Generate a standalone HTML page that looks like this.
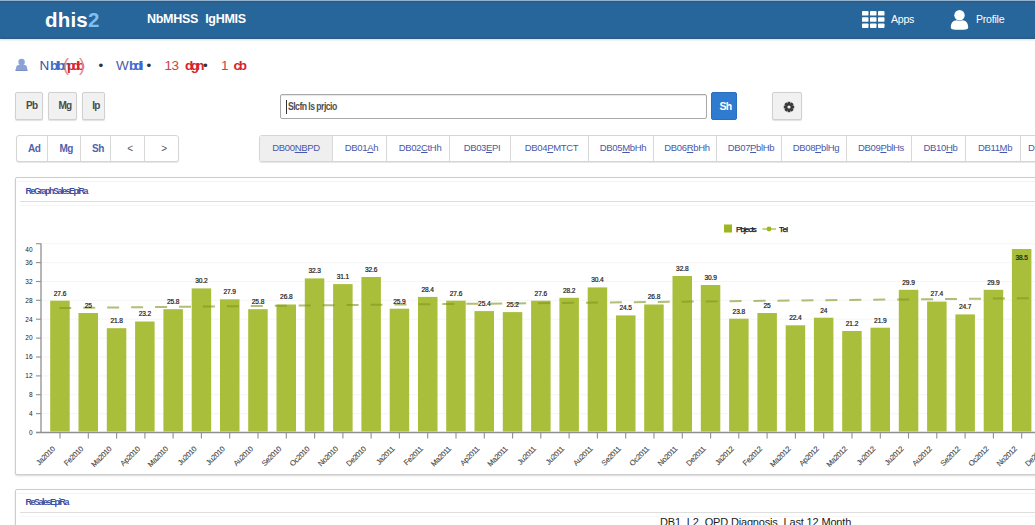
<!DOCTYPE html>
<html><head><meta charset="utf-8">
<style>
*{box-sizing:border-box}
html,body{margin:0;padding:0}
body{width:1035px;height:525px;overflow:hidden;background:#fff;font-family:"Liberation Sans",sans-serif;position:relative}
.abs{position:absolute}
.ul{top:57.5px;font-size:13.5px;white-space:nowrap}
#hdr{left:0;top:0;width:1035px;height:38.5px;background:#26669b;border-top:1px solid #8fb3d3;border-bottom:2px solid #305d85;box-shadow:inset 0 2px 0 #2e5e88, 0 1px 2px rgba(40,100,160,.22)}
#logo{left:45px;top:7.5px;font-size:20.5px;font-weight:bold;color:#fff;letter-spacing:0.2px}
#logo span{color:#7fbfee}
#apptitle{left:147px;top:12px;font-size:12.5px;font-weight:bold;color:#fff;letter-spacing:-0.3px;word-spacing:4px;white-space:nowrap}
.hw{color:#fff;font-size:10.6px;letter-spacing:-0.25px}
.btn{position:absolute;border:1px solid #d0d0d0;border-radius:2px;background:#f1f1f1;font-size:10px;font-weight:bold;color:#4a4a4a;text-align:center;box-shadow:0 1px 1px rgba(0,0,0,.12)}
.grp{position:absolute;border:1px solid #d5d5d5;border-radius:3px;background:#fff;box-shadow:0 1px 1px rgba(0,0,0,.10);display:flex;height:27px;top:135px}
.grp div{flex-shrink:0;border-left:1px solid #d8d8d8;font-size:10px;color:#3a4fa0;display:flex;align-items:center;justify-content:center;height:100%}
.g1 div{font-weight:bold;padding-left:5px;letter-spacing:-0.5px;color:#5262ab}
.tabs div{font-size:9.5px;color:#4858a8;letter-spacing:-0.35px;padding-bottom:2px;padding-left:4px}
.tabs div:first-child{padding-left:0}
.tabs u{text-decoration-thickness:1px;text-underline-offset:1px}
.grp div:first-child{border-left:none}
.panel{position:absolute;left:15px;width:1040px;border:1px solid #cdcdcd;border-radius:2px;background:#fff;box-shadow:0 1px 2px rgba(0,0,0,.16), inset 0 3px 0 #fff, inset 0 4px 0 #f3f3f3}
.ptitle{position:absolute;left:9.5px;font-size:8.8px;font-weight:bold;color:#3a4d9f;letter-spacing:-1.38px;white-space:nowrap}
.psep{position:absolute;left:4px;right:0;height:1px;background:#dedede;box-shadow:0 4px 0 #f6f6f6}
</style></head><body>
<div id="hdr" class="abs"></div>
<div id="logo" class="abs">dhis<span>2</span></div>
<div id="apptitle" class="abs">NbMHSS IgHMIS</div>
<!-- apps icon -->
<div class="abs" style="left:862px;top:11px;width:23px;height:17px">
 <svg width="23" height="17" viewBox="0 0 23 17"><g fill="#fff">
 <rect x="0" y="0" width="6.5" height="4.6" rx="0.9"/><rect x="8" y="0" width="6.5" height="4.6" rx="0.9"/><rect x="16" y="0" width="6.5" height="4.6" rx="0.9"/>
 <rect x="0" y="6.2" width="6.5" height="4.6" rx="0.9"/><rect x="8" y="6.2" width="6.5" height="4.6" rx="0.9"/><rect x="16" y="6.2" width="6.5" height="4.6" rx="0.9"/>
 <rect x="0" y="12.4" width="6.5" height="4.6" rx="0.9"/><rect x="8" y="12.4" width="6.5" height="4.6" rx="0.9"/><rect x="16" y="12.4" width="6.5" height="4.6" rx="0.9"/>
 </g></svg></div>
<div class="abs hw" style="left:891px;top:13px">Apps</div>
<div class="abs" style="left:950px;top:10px;width:19px;height:20px">
 <svg width="19" height="20" viewBox="0 0 19 20"><g fill="#fff"><circle cx="9.5" cy="5.3" r="5.2"/><path d="M0.8 17.5 C0.8 12.5 3.5 10.5 6.5 10.3 C8 11.2 11 11.2 12.5 10.3 C15.5 10.5 18.2 12.5 18.2 17.5 C18.2 19.2 16.5 19.8 9.5 19.8 C2.5 19.8 0.8 19.2 0.8 17.5 Z"/></g></svg></div>
<div class="abs hw" style="left:976px;top:13px">Profile</div>

<!-- user line -->
<div class="abs" style="left:15px;top:57px;width:13px;height:13px">
 <svg width="13" height="13" viewBox="0 0 13 13"><g fill="#8aa1da"><circle cx="6.6" cy="4" r="3.2"/><path d="M0.4 12.6 L1.3 8.8 C1.8 7.3 3.5 6.6 6.6 6.6 C9.7 6.6 11.4 7.3 11.9 8.8 L12.6 12.6Z"/></g><rect x="0.5" y="12" width="12" height="0.8" fill="#6b7fb8"/></svg></div>
<div class="abs ul" style="left:39.5px;color:#3d4f9f;letter-spacing:-0.8px">N</div>
<div class="abs ul" style="left:50px;color:#3f6ccc;font-weight:bold;letter-spacing:-2.6px">blbn</div>
<div class="abs ul" style="left:63px;top:55px;font-size:18px;color:#e58a8a;font-weight:normal;letter-spacing:-2px">(</div>
<div class="abs ul" style="left:67px;color:#d8232a;font-weight:bold;letter-spacing:-3.5px">pdb</div>
<div class="abs ul" style="left:79px;top:55px;font-size:18px;color:#e58a8a;letter-spacing:-2px">)</div>
<div class="abs ul" style="left:98.5px;color:#333">&#8226;</div>
<div class="abs ul" style="left:116px;color:#4a5aa8">W</div>
<div class="abs ul" style="left:129px;color:#3a6bd6;font-weight:bold;letter-spacing:-3.2px">bdli</div>
<div class="abs ul" style="left:146.5px;color:#333">&#8226;</div>
<div class="abs ul" style="left:164.5px;color:#c8424c;letter-spacing:-0.4px">13</div>
<div class="abs ul" style="left:185px;color:#d8232a;font-weight:bold;letter-spacing:-2.6px">dgn</div>
<div class="abs ul" style="left:203px;color:#333">&#8226;</div>
<div class="abs ul" style="left:221px;color:#c8424c">1</div>
<div class="abs ul" style="left:233.5px;color:#d8232a;font-weight:bold;letter-spacing:-2.2px">cb</div>
<!-- buttons row -->
<div class="btn" style="left:15px;top:92px;width:27.5px;height:28px;line-height:26px;padding-left:6px;letter-spacing:-0.6px">Pb</div>
<div class="btn" style="left:48px;top:92px;width:29px;height:28px;line-height:26px;padding-left:5px;letter-spacing:-0.6px">Mg</div>
<div class="btn" style="left:82px;top:92px;width:23px;height:28px;line-height:26px;padding-left:5px;letter-spacing:-0.6px">Ip</div>
<div class="abs" style="left:280px;top:94px;width:427px;height:25px;border:1px solid #a9a9a9;border-radius:2px;background:#fff;box-shadow:inset 0 1px 1px rgba(0,0,0,.1)"></div>
<div class="abs" style="left:285.5px;top:99.5px;width:1.6px;height:14.5px;background:#333"></div>
<div class="abs" style="left:288px;top:100px;font-size:11px;font-weight:bold;color:#505050;letter-spacing:-0.7px;white-space:nowrap;transform:scaleX(0.79);transform-origin:0 0">Slcfn ls prjcio</div>
<div class="abs" style="left:711px;top:92px;width:26px;height:28px;background:#2f7bd0;border-radius:2px;border:1px solid #2a6fbd;color:#fff;font-weight:bold;font-size:10.5px;line-height:26px;text-align:center;padding-left:3px;letter-spacing:-0.6px">Sh</div>
<div class="btn" style="left:772px;top:92px;width:30px;height:28px;">
 <svg width="12" height="12" viewBox="0 0 12 12" style="position:absolute;left:9.5px;top:8px"><g fill="#3a3a3a"><circle cx="6" cy="6" r="3.8"/>
 <g id="t"><rect x="4.6" y="0.8" width="2.8" height="10.4"/></g>
 <rect x="4.6" y="0.8" width="2.8" height="10.4" transform="rotate(45 6 6)"/><rect x="4.6" y="0.8" width="2.8" height="10.4" transform="rotate(90 6 6)"/><rect x="4.6" y="0.8" width="2.8" height="10.4" transform="rotate(135 6 6)"/></g>
 <circle cx="6" cy="6" r="1.6" fill="#f1f1f1"/></svg></div>

<!-- button group -->
<div class="grp g1" style="left:16px;width:163px">
 <div style="width:29.5px">Ad</div><div style="width:33.5px">Mg</div><div style="width:30px">Sh</div><div style="width:34px;font-weight:normal;color:#555">&lt;</div><div style="width:34px;font-weight:normal;color:#555">&gt;</div>
</div>
<!-- tabs -->
<div class="grp tabs" style="left:259px;width:800px">
 <div style="width:72px;background:#efefef">DB00<u>NB</u>PD</div>
 <div style="width:54px">DB01<u>A</u>h</div>
 <div style="width:63px">DB02<u>C</u>tHh</div>
 <div style="width:61px">DB03<u>E</u>PI</div>
 <div style="width:78px">DB04<u>P</u>MTCT</div>
 <div style="width:65px">DB05<u>M</u>bHh</div>
 <div style="width:63px">DB06<u>R</u>bHh</div>
 <div style="width:65px">DB07<u>P</u>blHb</div>
 <div style="width:65px">DB08<u>P</u>blHg</div>
 <div style="width:65px">DB09<u>P</u>blHs</div>
 <div style="width:54px">DB10<u>H</u>b</div>
 <div style="width:55px">DB11<u>M</u>b</div>
 <div style="width:50px;justify-content:flex-start;padding-left:7px">DB12</div>
</div>

<!-- panel 1 -->
<div class="panel" style="top:177px;height:298px">
 <div class="ptitle" style="top:8px">ReGraphSalesEpiRa</div>
 <div class="psep" style="top:23px"></div>
</div>
<svg class="abs" style="left:0;top:0" width="1035" height="525" font-family="Liberation Sans, sans-serif">
<rect x="724" y="224.5" width="8" height="8" fill="#9db51e"/>
<text x="736" y="232" font-size="8" fill="#111" stroke="#111" stroke-width="0.25" letter-spacing="-0.9">Pbjects</text>
<line x1="762.5" y1="229" x2="776" y2="229" stroke="#a9be3b" stroke-width="1.3"/>
<circle cx="769" cy="229" r="2.4" fill="#9db51e"/>
<text x="779" y="232" font-size="8" fill="#111" stroke="#111" stroke-width="0.25" letter-spacing="-0.6">Tel</text>
<line x1="41" y1="413.6" x2="1035" y2="413.6" stroke="#f5f5f5" stroke-width="1"/>
<line x1="41" y1="394.7" x2="1035" y2="394.7" stroke="#f5f5f5" stroke-width="1"/>
<line x1="41" y1="375.9" x2="1035" y2="375.9" stroke="#f5f5f5" stroke-width="1"/>
<line x1="41" y1="357.0" x2="1035" y2="357.0" stroke="#f5f5f5" stroke-width="1"/>
<line x1="41" y1="338.1" x2="1035" y2="338.1" stroke="#f5f5f5" stroke-width="1"/>
<line x1="41" y1="319.2" x2="1035" y2="319.2" stroke="#f5f5f5" stroke-width="1"/>
<line x1="41" y1="300.3" x2="1035" y2="300.3" stroke="#f5f5f5" stroke-width="1"/>
<line x1="41" y1="281.5" x2="1035" y2="281.5" stroke="#f5f5f5" stroke-width="1"/>
<line x1="41" y1="262.6" x2="1035" y2="262.6" stroke="#f5f5f5" stroke-width="1"/>
<line x1="41" y1="243.7" x2="1035" y2="243.7" stroke="#f5f5f5" stroke-width="1"/>
<rect x="50.2" y="300.7" width="19.5" height="130.8" fill="#a9be3b"/>
<rect x="78.5" y="313.0" width="19.5" height="118.5" fill="#a9be3b"/>
<rect x="106.8" y="328.2" width="19.5" height="103.3" fill="#a9be3b"/>
<rect x="135.1" y="321.5" width="19.5" height="110.0" fill="#a9be3b"/>
<rect x="163.4" y="309.2" width="19.5" height="122.3" fill="#a9be3b"/>
<rect x="191.7" y="288.4" width="19.5" height="143.1" fill="#a9be3b"/>
<rect x="220.0" y="299.3" width="19.5" height="132.2" fill="#a9be3b"/>
<rect x="248.2" y="309.2" width="19.5" height="122.3" fill="#a9be3b"/>
<rect x="276.5" y="304.5" width="19.5" height="127.0" fill="#a9be3b"/>
<rect x="304.8" y="278.4" width="19.5" height="153.1" fill="#a9be3b"/>
<rect x="333.1" y="284.1" width="19.5" height="147.4" fill="#a9be3b"/>
<rect x="361.4" y="277.0" width="19.5" height="154.5" fill="#a9be3b"/>
<rect x="389.7" y="308.7" width="19.5" height="122.8" fill="#a9be3b"/>
<rect x="418.0" y="296.9" width="19.5" height="134.6" fill="#a9be3b"/>
<rect x="446.2" y="300.7" width="19.5" height="130.8" fill="#a9be3b"/>
<rect x="474.5" y="311.1" width="19.5" height="120.4" fill="#a9be3b"/>
<rect x="502.8" y="312.1" width="19.5" height="119.4" fill="#a9be3b"/>
<rect x="531.1" y="300.7" width="19.5" height="130.8" fill="#a9be3b"/>
<rect x="559.4" y="297.8" width="19.5" height="133.7" fill="#a9be3b"/>
<rect x="587.7" y="287.4" width="19.5" height="144.1" fill="#a9be3b"/>
<rect x="616.0" y="315.4" width="19.5" height="116.1" fill="#a9be3b"/>
<rect x="644.2" y="304.5" width="19.5" height="127.0" fill="#a9be3b"/>
<rect x="672.5" y="276.0" width="19.5" height="155.5" fill="#a9be3b"/>
<rect x="700.8" y="285.0" width="19.5" height="146.5" fill="#a9be3b"/>
<rect x="729.1" y="318.7" width="19.5" height="112.8" fill="#a9be3b"/>
<rect x="757.4" y="313.0" width="19.5" height="118.5" fill="#a9be3b"/>
<rect x="785.7" y="325.3" width="19.5" height="106.2" fill="#a9be3b"/>
<rect x="813.9" y="317.7" width="19.5" height="113.8" fill="#a9be3b"/>
<rect x="842.2" y="331.0" width="19.5" height="100.5" fill="#a9be3b"/>
<rect x="870.5" y="327.7" width="19.5" height="103.8" fill="#a9be3b"/>
<rect x="898.8" y="289.8" width="19.5" height="141.7" fill="#a9be3b"/>
<rect x="927.1" y="301.6" width="19.5" height="129.9" fill="#a9be3b"/>
<rect x="955.4" y="314.4" width="19.5" height="117.1" fill="#a9be3b"/>
<rect x="983.7" y="289.8" width="19.5" height="141.7" fill="#a9be3b"/>
<rect x="1011.9" y="249.0" width="19.5" height="182.5" fill="#a9be3b"/>
<rect x="1040.2" y="289.3" width="19.5" height="142.2" fill="#a9be3b"/>
<line x1="59.3" y1="308" x2="1035" y2="298.1" stroke="#82961e" stroke-opacity="0.62" stroke-width="2" stroke-dasharray="12 11.94"/>
<text x="60.0" y="295.5" text-anchor="middle" font-size="6.6" letter-spacing="-0.1" fill="#1a1a1a" stroke="#1a1a1a" stroke-width="0.2">27.6</text>
<text x="88.3" y="307.8" text-anchor="middle" font-size="6.6" letter-spacing="-0.1" fill="#1a1a1a" stroke="#1a1a1a" stroke-width="0.2">25</text>
<text x="116.6" y="323.0" text-anchor="middle" font-size="6.6" letter-spacing="-0.1" fill="#1a1a1a" stroke="#1a1a1a" stroke-width="0.2">21.8</text>
<text x="144.9" y="316.3" text-anchor="middle" font-size="6.6" letter-spacing="-0.1" fill="#1a1a1a" stroke="#1a1a1a" stroke-width="0.2">23.2</text>
<text x="173.1" y="304.0" text-anchor="middle" font-size="6.6" letter-spacing="-0.1" fill="#1a1a1a" stroke="#1a1a1a" stroke-width="0.2">25.8</text>
<text x="201.4" y="283.2" text-anchor="middle" font-size="6.6" letter-spacing="-0.1" fill="#1a1a1a" stroke="#1a1a1a" stroke-width="0.2">30.2</text>
<text x="229.7" y="294.1" text-anchor="middle" font-size="6.6" letter-spacing="-0.1" fill="#1a1a1a" stroke="#1a1a1a" stroke-width="0.2">27.9</text>
<text x="258.0" y="304.0" text-anchor="middle" font-size="6.6" letter-spacing="-0.1" fill="#1a1a1a" stroke="#1a1a1a" stroke-width="0.2">25.8</text>
<text x="286.3" y="299.3" text-anchor="middle" font-size="6.6" letter-spacing="-0.1" fill="#1a1a1a" stroke="#1a1a1a" stroke-width="0.2">26.8</text>
<text x="314.6" y="273.2" text-anchor="middle" font-size="6.6" letter-spacing="-0.1" fill="#1a1a1a" stroke="#1a1a1a" stroke-width="0.2">32.3</text>
<text x="342.9" y="278.9" text-anchor="middle" font-size="6.6" letter-spacing="-0.1" fill="#1a1a1a" stroke="#1a1a1a" stroke-width="0.2">31.1</text>
<text x="371.1" y="271.8" text-anchor="middle" font-size="6.6" letter-spacing="-0.1" fill="#1a1a1a" stroke="#1a1a1a" stroke-width="0.2">32.6</text>
<text x="399.4" y="303.5" text-anchor="middle" font-size="6.6" letter-spacing="-0.1" fill="#1a1a1a" stroke="#1a1a1a" stroke-width="0.2">25.9</text>
<text x="427.7" y="291.7" text-anchor="middle" font-size="6.6" letter-spacing="-0.1" fill="#1a1a1a" stroke="#1a1a1a" stroke-width="0.2">28.4</text>
<text x="456.0" y="295.5" text-anchor="middle" font-size="6.6" letter-spacing="-0.1" fill="#1a1a1a" stroke="#1a1a1a" stroke-width="0.2">27.6</text>
<text x="484.3" y="305.9" text-anchor="middle" font-size="6.6" letter-spacing="-0.1" fill="#1a1a1a" stroke="#1a1a1a" stroke-width="0.2">25.4</text>
<text x="512.6" y="306.9" text-anchor="middle" font-size="6.6" letter-spacing="-0.1" fill="#1a1a1a" stroke="#1a1a1a" stroke-width="0.2">25.2</text>
<text x="540.8" y="295.5" text-anchor="middle" font-size="6.6" letter-spacing="-0.1" fill="#1a1a1a" stroke="#1a1a1a" stroke-width="0.2">27.6</text>
<text x="569.1" y="292.6" text-anchor="middle" font-size="6.6" letter-spacing="-0.1" fill="#1a1a1a" stroke="#1a1a1a" stroke-width="0.2">28.2</text>
<text x="597.4" y="282.2" text-anchor="middle" font-size="6.6" letter-spacing="-0.1" fill="#1a1a1a" stroke="#1a1a1a" stroke-width="0.2">30.4</text>
<text x="625.7" y="310.2" text-anchor="middle" font-size="6.6" letter-spacing="-0.1" fill="#1a1a1a" stroke="#1a1a1a" stroke-width="0.2">24.5</text>
<text x="654.0" y="299.3" text-anchor="middle" font-size="6.6" letter-spacing="-0.1" fill="#1a1a1a" stroke="#1a1a1a" stroke-width="0.2">26.8</text>
<text x="682.3" y="270.8" text-anchor="middle" font-size="6.6" letter-spacing="-0.1" fill="#1a1a1a" stroke="#1a1a1a" stroke-width="0.2">32.8</text>
<text x="710.6" y="279.8" text-anchor="middle" font-size="6.6" letter-spacing="-0.1" fill="#1a1a1a" stroke="#1a1a1a" stroke-width="0.2">30.9</text>
<text x="738.8" y="313.5" text-anchor="middle" font-size="6.6" letter-spacing="-0.1" fill="#1a1a1a" stroke="#1a1a1a" stroke-width="0.2">23.8</text>
<text x="767.1" y="307.8" text-anchor="middle" font-size="6.6" letter-spacing="-0.1" fill="#1a1a1a" stroke="#1a1a1a" stroke-width="0.2">25</text>
<text x="795.4" y="320.1" text-anchor="middle" font-size="6.6" letter-spacing="-0.1" fill="#1a1a1a" stroke="#1a1a1a" stroke-width="0.2">22.4</text>
<text x="823.7" y="312.5" text-anchor="middle" font-size="6.6" letter-spacing="-0.1" fill="#1a1a1a" stroke="#1a1a1a" stroke-width="0.2">24</text>
<text x="852.0" y="325.8" text-anchor="middle" font-size="6.6" letter-spacing="-0.1" fill="#1a1a1a" stroke="#1a1a1a" stroke-width="0.2">21.2</text>
<text x="880.3" y="322.5" text-anchor="middle" font-size="6.6" letter-spacing="-0.1" fill="#1a1a1a" stroke="#1a1a1a" stroke-width="0.2">21.9</text>
<text x="908.5" y="284.6" text-anchor="middle" font-size="6.6" letter-spacing="-0.1" fill="#1a1a1a" stroke="#1a1a1a" stroke-width="0.2">29.9</text>
<text x="936.8" y="296.4" text-anchor="middle" font-size="6.6" letter-spacing="-0.1" fill="#1a1a1a" stroke="#1a1a1a" stroke-width="0.2">27.4</text>
<text x="965.1" y="309.2" text-anchor="middle" font-size="6.6" letter-spacing="-0.1" fill="#1a1a1a" stroke="#1a1a1a" stroke-width="0.2">24.7</text>
<text x="993.4" y="284.6" text-anchor="middle" font-size="6.6" letter-spacing="-0.1" fill="#1a1a1a" stroke="#1a1a1a" stroke-width="0.2">29.9</text>
<text x="1021.7" y="260.0" text-anchor="middle" font-size="6.6" letter-spacing="-0.1" fill="#1a1a1a" stroke="#1a1a1a" stroke-width="0.2">38.5</text>
<text x="1050.0" y="284.1" text-anchor="middle" font-size="6.6" letter-spacing="-0.1" fill="#1a1a1a" stroke="#1a1a1a" stroke-width="0.2">30</text>
<line x1="41" y1="243.5" x2="41" y2="432.5" stroke="#8f8f8f" stroke-width="1.3"/>
<line x1="36" y1="432.5" x2="1035" y2="432.5" stroke="#8f8f8f" stroke-width="1.3"/>
<line x1="36" y1="432.5" x2="41" y2="432.5" stroke="#8f8f8f" stroke-width="1.1"/>
<text x="32.5" y="434.8" text-anchor="end" font-size="6.5" fill="#222">0</text>
<line x1="36" y1="413.6" x2="41" y2="413.6" stroke="#8f8f8f" stroke-width="1.1"/>
<text x="32.5" y="415.9" text-anchor="end" font-size="6.5" fill="#222">4</text>
<line x1="36" y1="394.7" x2="41" y2="394.7" stroke="#8f8f8f" stroke-width="1.1"/>
<text x="32.5" y="397.0" text-anchor="end" font-size="6.5" fill="#222">8</text>
<line x1="36" y1="375.9" x2="41" y2="375.9" stroke="#8f8f8f" stroke-width="1.1"/>
<text x="32.5" y="378.2" text-anchor="end" font-size="6.5" fill="#222">12</text>
<line x1="36" y1="357.0" x2="41" y2="357.0" stroke="#8f8f8f" stroke-width="1.1"/>
<text x="32.5" y="359.3" text-anchor="end" font-size="6.5" fill="#222">16</text>
<line x1="36" y1="338.1" x2="41" y2="338.1" stroke="#8f8f8f" stroke-width="1.1"/>
<text x="32.5" y="340.4" text-anchor="end" font-size="6.5" fill="#222">20</text>
<line x1="36" y1="319.2" x2="41" y2="319.2" stroke="#8f8f8f" stroke-width="1.1"/>
<text x="32.5" y="321.5" text-anchor="end" font-size="6.5" fill="#222">24</text>
<line x1="36" y1="300.3" x2="41" y2="300.3" stroke="#8f8f8f" stroke-width="1.1"/>
<text x="32.5" y="302.6" text-anchor="end" font-size="6.5" fill="#222">28</text>
<line x1="36" y1="281.5" x2="41" y2="281.5" stroke="#8f8f8f" stroke-width="1.1"/>
<text x="32.5" y="283.8" text-anchor="end" font-size="6.5" fill="#222">32</text>
<line x1="36" y1="262.6" x2="41" y2="262.6" stroke="#8f8f8f" stroke-width="1.1"/>
<text x="32.5" y="264.9" text-anchor="end" font-size="6.5" fill="#222">36</text>
<line x1="36" y1="243.7" x2="41" y2="243.7" stroke="#8f8f8f" stroke-width="1.1"/>
<text x="32.5" y="252.3" text-anchor="end" font-size="6.5" fill="#222">40</text>
<line x1="60.0" y1="432.5" x2="60.0" y2="438.5" stroke="#8f8f8f" stroke-width="1.1"/>
<text transform="translate(55.5,449.5) rotate(-45)" text-anchor="end" font-size="7.6" letter-spacing="-0.35" fill="#444" stroke="#444" stroke-width="0.1">Ja2010</text>
<line x1="88.3" y1="432.5" x2="88.3" y2="438.5" stroke="#8f8f8f" stroke-width="1.1"/>
<text transform="translate(83.8,449.5) rotate(-45)" text-anchor="end" font-size="7.6" letter-spacing="-0.35" fill="#444" stroke="#444" stroke-width="0.1">Fe2010</text>
<line x1="116.6" y1="432.5" x2="116.6" y2="438.5" stroke="#8f8f8f" stroke-width="1.1"/>
<text transform="translate(112.1,449.5) rotate(-45)" text-anchor="end" font-size="7.6" letter-spacing="-0.35" fill="#444" stroke="#444" stroke-width="0.1">Ma2010</text>
<line x1="144.9" y1="432.5" x2="144.9" y2="438.5" stroke="#8f8f8f" stroke-width="1.1"/>
<text transform="translate(140.4,449.5) rotate(-45)" text-anchor="end" font-size="7.6" letter-spacing="-0.35" fill="#444" stroke="#444" stroke-width="0.1">Ap2010</text>
<line x1="173.1" y1="432.5" x2="173.1" y2="438.5" stroke="#8f8f8f" stroke-width="1.1"/>
<text transform="translate(168.6,449.5) rotate(-45)" text-anchor="end" font-size="7.6" letter-spacing="-0.35" fill="#444" stroke="#444" stroke-width="0.1">Ma2010</text>
<line x1="201.4" y1="432.5" x2="201.4" y2="438.5" stroke="#8f8f8f" stroke-width="1.1"/>
<text transform="translate(196.9,449.5) rotate(-45)" text-anchor="end" font-size="7.6" letter-spacing="-0.35" fill="#444" stroke="#444" stroke-width="0.1">Ju2010</text>
<line x1="229.7" y1="432.5" x2="229.7" y2="438.5" stroke="#8f8f8f" stroke-width="1.1"/>
<text transform="translate(225.2,449.5) rotate(-45)" text-anchor="end" font-size="7.6" letter-spacing="-0.35" fill="#444" stroke="#444" stroke-width="0.1">Ju2010</text>
<line x1="258.0" y1="432.5" x2="258.0" y2="438.5" stroke="#8f8f8f" stroke-width="1.1"/>
<text transform="translate(253.5,449.5) rotate(-45)" text-anchor="end" font-size="7.6" letter-spacing="-0.35" fill="#444" stroke="#444" stroke-width="0.1">Au2010</text>
<line x1="286.3" y1="432.5" x2="286.3" y2="438.5" stroke="#8f8f8f" stroke-width="1.1"/>
<text transform="translate(281.8,449.5) rotate(-45)" text-anchor="end" font-size="7.6" letter-spacing="-0.35" fill="#444" stroke="#444" stroke-width="0.1">Se2010</text>
<line x1="314.6" y1="432.5" x2="314.6" y2="438.5" stroke="#8f8f8f" stroke-width="1.1"/>
<text transform="translate(310.1,449.5) rotate(-45)" text-anchor="end" font-size="7.6" letter-spacing="-0.35" fill="#444" stroke="#444" stroke-width="0.1">Oc2010</text>
<line x1="342.9" y1="432.5" x2="342.9" y2="438.5" stroke="#8f8f8f" stroke-width="1.1"/>
<text transform="translate(338.4,449.5) rotate(-45)" text-anchor="end" font-size="7.6" letter-spacing="-0.35" fill="#444" stroke="#444" stroke-width="0.1">No2010</text>
<line x1="371.1" y1="432.5" x2="371.1" y2="438.5" stroke="#8f8f8f" stroke-width="1.1"/>
<text transform="translate(366.6,449.5) rotate(-45)" text-anchor="end" font-size="7.6" letter-spacing="-0.35" fill="#444" stroke="#444" stroke-width="0.1">De2010</text>
<line x1="399.4" y1="432.5" x2="399.4" y2="438.5" stroke="#8f8f8f" stroke-width="1.1"/>
<text transform="translate(394.9,449.5) rotate(-45)" text-anchor="end" font-size="7.6" letter-spacing="-0.35" fill="#444" stroke="#444" stroke-width="0.1">Ja2011</text>
<line x1="427.7" y1="432.5" x2="427.7" y2="438.5" stroke="#8f8f8f" stroke-width="1.1"/>
<text transform="translate(423.2,449.5) rotate(-45)" text-anchor="end" font-size="7.6" letter-spacing="-0.35" fill="#444" stroke="#444" stroke-width="0.1">Fe2011</text>
<line x1="456.0" y1="432.5" x2="456.0" y2="438.5" stroke="#8f8f8f" stroke-width="1.1"/>
<text transform="translate(451.5,449.5) rotate(-45)" text-anchor="end" font-size="7.6" letter-spacing="-0.35" fill="#444" stroke="#444" stroke-width="0.1">Ma2011</text>
<line x1="484.3" y1="432.5" x2="484.3" y2="438.5" stroke="#8f8f8f" stroke-width="1.1"/>
<text transform="translate(479.8,449.5) rotate(-45)" text-anchor="end" font-size="7.6" letter-spacing="-0.35" fill="#444" stroke="#444" stroke-width="0.1">Ap2011</text>
<line x1="512.6" y1="432.5" x2="512.6" y2="438.5" stroke="#8f8f8f" stroke-width="1.1"/>
<text transform="translate(508.1,449.5) rotate(-45)" text-anchor="end" font-size="7.6" letter-spacing="-0.35" fill="#444" stroke="#444" stroke-width="0.1">Ma2011</text>
<line x1="540.8" y1="432.5" x2="540.8" y2="438.5" stroke="#8f8f8f" stroke-width="1.1"/>
<text transform="translate(536.3,449.5) rotate(-45)" text-anchor="end" font-size="7.6" letter-spacing="-0.35" fill="#444" stroke="#444" stroke-width="0.1">Ju2011</text>
<line x1="569.1" y1="432.5" x2="569.1" y2="438.5" stroke="#8f8f8f" stroke-width="1.1"/>
<text transform="translate(564.6,449.5) rotate(-45)" text-anchor="end" font-size="7.6" letter-spacing="-0.35" fill="#444" stroke="#444" stroke-width="0.1">Ju2011</text>
<line x1="597.4" y1="432.5" x2="597.4" y2="438.5" stroke="#8f8f8f" stroke-width="1.1"/>
<text transform="translate(592.9,449.5) rotate(-45)" text-anchor="end" font-size="7.6" letter-spacing="-0.35" fill="#444" stroke="#444" stroke-width="0.1">Au2011</text>
<line x1="625.7" y1="432.5" x2="625.7" y2="438.5" stroke="#8f8f8f" stroke-width="1.1"/>
<text transform="translate(621.2,449.5) rotate(-45)" text-anchor="end" font-size="7.6" letter-spacing="-0.35" fill="#444" stroke="#444" stroke-width="0.1">Se2011</text>
<line x1="654.0" y1="432.5" x2="654.0" y2="438.5" stroke="#8f8f8f" stroke-width="1.1"/>
<text transform="translate(649.5,449.5) rotate(-45)" text-anchor="end" font-size="7.6" letter-spacing="-0.35" fill="#444" stroke="#444" stroke-width="0.1">Oc2011</text>
<line x1="682.3" y1="432.5" x2="682.3" y2="438.5" stroke="#8f8f8f" stroke-width="1.1"/>
<text transform="translate(677.8,449.5) rotate(-45)" text-anchor="end" font-size="7.6" letter-spacing="-0.35" fill="#444" stroke="#444" stroke-width="0.1">No2011</text>
<line x1="710.6" y1="432.5" x2="710.6" y2="438.5" stroke="#8f8f8f" stroke-width="1.1"/>
<text transform="translate(706.1,449.5) rotate(-45)" text-anchor="end" font-size="7.6" letter-spacing="-0.35" fill="#444" stroke="#444" stroke-width="0.1">De2011</text>
<line x1="738.8" y1="432.5" x2="738.8" y2="438.5" stroke="#8f8f8f" stroke-width="1.1"/>
<text transform="translate(734.3,449.5) rotate(-45)" text-anchor="end" font-size="7.6" letter-spacing="-0.35" fill="#444" stroke="#444" stroke-width="0.1">Ja2012</text>
<line x1="767.1" y1="432.5" x2="767.1" y2="438.5" stroke="#8f8f8f" stroke-width="1.1"/>
<text transform="translate(762.6,449.5) rotate(-45)" text-anchor="end" font-size="7.6" letter-spacing="-0.35" fill="#444" stroke="#444" stroke-width="0.1">Fe2012</text>
<line x1="795.4" y1="432.5" x2="795.4" y2="438.5" stroke="#8f8f8f" stroke-width="1.1"/>
<text transform="translate(790.9,449.5) rotate(-45)" text-anchor="end" font-size="7.6" letter-spacing="-0.35" fill="#444" stroke="#444" stroke-width="0.1">Ma2012</text>
<line x1="823.7" y1="432.5" x2="823.7" y2="438.5" stroke="#8f8f8f" stroke-width="1.1"/>
<text transform="translate(819.2,449.5) rotate(-45)" text-anchor="end" font-size="7.6" letter-spacing="-0.35" fill="#444" stroke="#444" stroke-width="0.1">Ap2012</text>
<line x1="852.0" y1="432.5" x2="852.0" y2="438.5" stroke="#8f8f8f" stroke-width="1.1"/>
<text transform="translate(847.5,449.5) rotate(-45)" text-anchor="end" font-size="7.6" letter-spacing="-0.35" fill="#444" stroke="#444" stroke-width="0.1">Ma2012</text>
<line x1="880.3" y1="432.5" x2="880.3" y2="438.5" stroke="#8f8f8f" stroke-width="1.1"/>
<text transform="translate(875.8,449.5) rotate(-45)" text-anchor="end" font-size="7.6" letter-spacing="-0.35" fill="#444" stroke="#444" stroke-width="0.1">Ju2012</text>
<line x1="908.5" y1="432.5" x2="908.5" y2="438.5" stroke="#8f8f8f" stroke-width="1.1"/>
<text transform="translate(904.0,449.5) rotate(-45)" text-anchor="end" font-size="7.6" letter-spacing="-0.35" fill="#444" stroke="#444" stroke-width="0.1">Ju2012</text>
<line x1="936.8" y1="432.5" x2="936.8" y2="438.5" stroke="#8f8f8f" stroke-width="1.1"/>
<text transform="translate(932.3,449.5) rotate(-45)" text-anchor="end" font-size="7.6" letter-spacing="-0.35" fill="#444" stroke="#444" stroke-width="0.1">Au2012</text>
<line x1="965.1" y1="432.5" x2="965.1" y2="438.5" stroke="#8f8f8f" stroke-width="1.1"/>
<text transform="translate(960.6,449.5) rotate(-45)" text-anchor="end" font-size="7.6" letter-spacing="-0.35" fill="#444" stroke="#444" stroke-width="0.1">Se2012</text>
<line x1="993.4" y1="432.5" x2="993.4" y2="438.5" stroke="#8f8f8f" stroke-width="1.1"/>
<text transform="translate(988.9,449.5) rotate(-45)" text-anchor="end" font-size="7.6" letter-spacing="-0.35" fill="#444" stroke="#444" stroke-width="0.1">Oc2012</text>
<line x1="1021.7" y1="432.5" x2="1021.7" y2="438.5" stroke="#8f8f8f" stroke-width="1.1"/>
<text transform="translate(1017.2,449.5) rotate(-45)" text-anchor="end" font-size="7.6" letter-spacing="-0.35" fill="#444" stroke="#444" stroke-width="0.1">No2012</text>
<line x1="1050.0" y1="432.5" x2="1050.0" y2="438.5" stroke="#8f8f8f" stroke-width="1.1"/>
<text transform="translate(1045.5,449.5) rotate(-45)" text-anchor="end" font-size="7.6" letter-spacing="-0.35" fill="#444" stroke="#444" stroke-width="0.1">De2012</text>
</svg>

<!-- panel 2 -->
<div class="panel" style="top:489px;height:60px">
 <div class="ptitle" style="top:7px">ReSalesEpiRa</div>
 <div class="psep" style="top:22px"></div>
</div>
<div class="abs" style="left:660px;top:516px;font-size:11px;color:#1a1a1a;letter-spacing:-0.17px;white-space:nowrap">DB1_L2_OPD Diagnosis_Last 12 Month</div>
</body></html>
